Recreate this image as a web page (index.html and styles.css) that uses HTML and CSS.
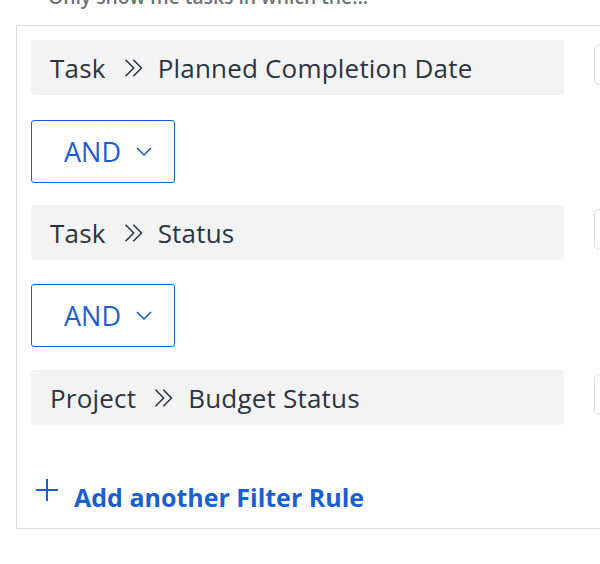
FILE: index.html
```html
<!DOCTYPE html>
<html>
<head>
<meta charset="utf-8">
<link rel="stylesheet" href="styles.css">
</head>
<body>
<div class="intro">Only show me tasks in which the...</div>
<div class="panel">
  <div class="rule">
    <div class="field"><span>Task</span><svg class="sep" viewBox="0 0 19 18" width="19" height="18"><path d="M1.5 0.8 L9.7 9 L1.5 17.2 M9.3 0.8 L17.5 9 L9.3 17.2" fill="none" stroke="#2c3341" stroke-width="1.5"/></svg><span>Planned Completion Date</span></div>
    <div class="op"></div>
  </div>
  <button class="conj">AND<svg class="chev" viewBox="0 0 16 9" width="16" height="9"><path d="M1 1 L8 8 L15 1" fill="none" stroke="#1a5fd0" stroke-width="1.6"/></svg></button>
  <div class="rule">
    <div class="field"><span>Task</span><svg class="sep" viewBox="0 0 19 18" width="19" height="18"><path d="M1.5 0.8 L9.7 9 L1.5 17.2 M9.3 0.8 L17.5 9 L9.3 17.2" fill="none" stroke="#2c3341" stroke-width="1.5"/></svg><span>Status</span></div>
    <div class="op"></div>
  </div>
  <button class="conj second">AND<svg class="chev" viewBox="0 0 16 9" width="16" height="9"><path d="M1 1 L8 8 L15 1" fill="none" stroke="#1a5fd0" stroke-width="1.6"/></svg></button>
  <div class="rule">
    <div class="field"><span>Project</span><svg class="sep" viewBox="0 0 19 18" width="19" height="18"><path d="M1.5 0.8 L9.7 9 L1.5 17.2 M9.3 0.8 L17.5 9 L9.3 17.2" fill="none" stroke="#2c3341" stroke-width="1.5"/></svg><span>Budget Status</span></div>
    <div class="op"></div>
  </div>
  <a class="add" href="#"><svg class="plus" viewBox="0 0 22 22" width="22" height="22"><path d="M11 0 V22 M0 11 H22" fill="none" stroke="#1a5fd0" stroke-width="2"/></svg><span>Add another Filter Rule</span></a>
</div>
</body>
</html>
```
FILE: styles.css
```css
html, body {
  margin: 0;
  padding: 0;
  background: #fff;
  overflow: hidden;
}
body {
  font-family: "Open Sans", Lato, sans-serif;
  width: 600px;
  height: 564px;
}
.intro {
  margin: -14px 0 0 48px;
  height: 22px;
  font-size: 19.3px;
  line-height: 22px;
  font-weight: 600;
  color: #6e7178;
  white-space: nowrap;
}
.panel {
  margin: 17px 0 0 16px;
  width: 700px;
  border: 1px solid #dedede;
  padding: 14px 0 0 14px;
  height: 504px;
  box-sizing: border-box;
}
.rule {
  display: flex;
  align-items: flex-start;
  gap: 30px;
}
.field {
  width: 533px;
  height: 55px;
  box-sizing: border-box;
  background: #f3f3f3;
  border-radius: 4px;
  display: flex;
  align-items: center;
  padding-left: 19px;
  font-size: 26px;
  letter-spacing: 0.2px;
  color: #2c3341;
}
.sep {
  margin: 0 15px 0 18px;
}
.op {
  margin-top: 4px;
  width: 100px;
  height: 39px;
  border: 1px solid #dddddd;
  border-radius: 5px;
}
.conj {
  display: flex;
  align-items: center;
  margin: 25px 0 22px;
  width: 144px;
  height: 63px;
  box-sizing: border-box;
  border: 1px solid #1a5fd0;
  border-radius: 3px;
  background: #fff;
  padding: 0 0 0 32px;
  font-family: inherit;
  font-size: 27px;
  color: #1a5fd0;
}
.conj.second {
  margin: 24px 0 23px;
}
.chev {
  margin-left: 15px;
}
.add {
  display: flex;
  align-items: flex-start;
  margin: 57px 0 0 5px;
  text-decoration: none;
  color: #1a5fd0;
  font-size: 25px;
  line-height: 30px;
  font-weight: 700;
}
.plus {
  margin: -3px 16px 0 0;
}
```
